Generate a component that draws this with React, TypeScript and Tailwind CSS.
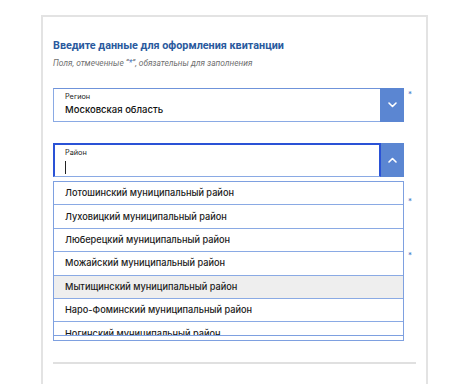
import React from "react";

const items = [
  "Лотошинский муниципальный район",
  "Луховицкий муниципальный район",
  "Люберецкий муниципальный район",
  "Можайский муниципальный район",
  "Мытищинский муниципальный район",
  "Наро-Фоминский муниципальный район",
  "Ногинский муниципальный район",
];

function Chevron({ up }: { up?: boolean }) {
  return (
    <svg width="9" height="6" viewBox="0 0 9 6" fill="none">
      <path
        d={up ? "M1 5L4.5 1.5L8 5" : "M1 1L4.5 4.5L8 1"}
        stroke="white"
        strokeWidth="1.6"
        strokeLinecap="round"
        strokeLinejoin="round"
      />
    </svg>
  );
}

function Star() {
  return (
    <div className="w-[12px] pl-[4px] text-[8px] leading-none text-[#4a78c8] pt-[2px]">*</div>
  );
}

export default function App() {
  const fieldFont = { fontFamily: "Inter, 'Noto Sans', sans-serif" };
  return (
    <div className="w-[471px] h-[384px] overflow-hidden bg-white">
      <div className="ml-[41px] mt-[15px] w-[387px] h-[400px] border-2 border-b-0 border-[#e3e3e3] pl-[10px] pt-[21px]">
        <div
          className="text-[10.8px] font-bold text-[#2a5a9e] leading-[15px]"
          style={{ fontFamily: "Roboto, 'Noto Sans', sans-serif" }}
        >
          Введите данные для оформления квитанции
        </div>
        <div
          className="mt-[4px] text-[8.4px] italic text-[#707070] leading-[12px]"
          style={{ fontFamily: "Roboto, 'Noto Sans', sans-serif" }}
        >
          Поля, отмеченные “<span className="text-[#4a78c8]">*</span>”, обязательны для заполнения
        </div>

        {/* Region */}
        <div className="mt-[19px] flex" style={fieldFont}>
          <div className="w-[351px] h-[34px] flex">
            <div className="flex-1 border border-r-0 border-[#8aaae4] border-t-[#6f93da] pl-[11px] pt-[3px]">
              <div className="text-[7.3px] leading-[10px] text-[#222]">Регион</div>
              <div className="mt-[1px] text-[9.5px] font-medium leading-[14px] text-[#111]">Московская область</div>
            </div>
            <div className="w-[24px] bg-[#5b86d2] flex items-center justify-center">
              <Chevron />
            </div>
          </div>
          <Star />
        </div>

        {/* Raion */}
        <div className="mt-[21px] relative" style={fieldFont}>
          <div className="flex">
            <div className="w-[351px] h-[34px] flex">
              <div className="flex-1 border-2 border-b border-[#2a52d6] border-b-[#8aaae4] pl-[10px] pt-[3px]">
                <div className="text-[7.3px] leading-[10px] text-[#222]">Район</div>
                <div className="mt-[3px] w-[1px] h-[13px] bg-[#222]" />
              </div>
              <div className="w-[23px] bg-[#5b86d2] flex items-center justify-center">
                <Chevron up />
              </div>
            </div>
          </div>

          {/* hidden fields under dropdown */}
          <div className="mt-[18px] flex">
            <div className="w-[351px] h-[34px]" />
            <Star />
          </div>
          <div className="mt-[20px] flex">
            <div className="w-[351px] h-[34px]" />
            <Star />
          </div>

          <div className="absolute left-0 top-[38px] w-[351px] h-[160px] border border-t border-[#7ea0e0] bg-white">
            <div className="h-[154px] overflow-hidden border-b border-[#7ea0e0]">
              {items.map((t, i) => (
                <div
                  key={t}
                  className={`h-[23.4px] flex items-center pl-[11px] border-b border-[#8aaae4] text-[9.2px] font-medium text-[#1a1a1a] ${
                    i === 4 ? "bg-[#eeeeee]" : "bg-white"
                  }`}
                >
                  {t}
                </div>
              ))}
            </div>
          </div>
        </div>

        <div className="mt-[79px] w-[363px] h-[2px] bg-[#e0e0e0]" />
      </div>
    </div>
  );
}
